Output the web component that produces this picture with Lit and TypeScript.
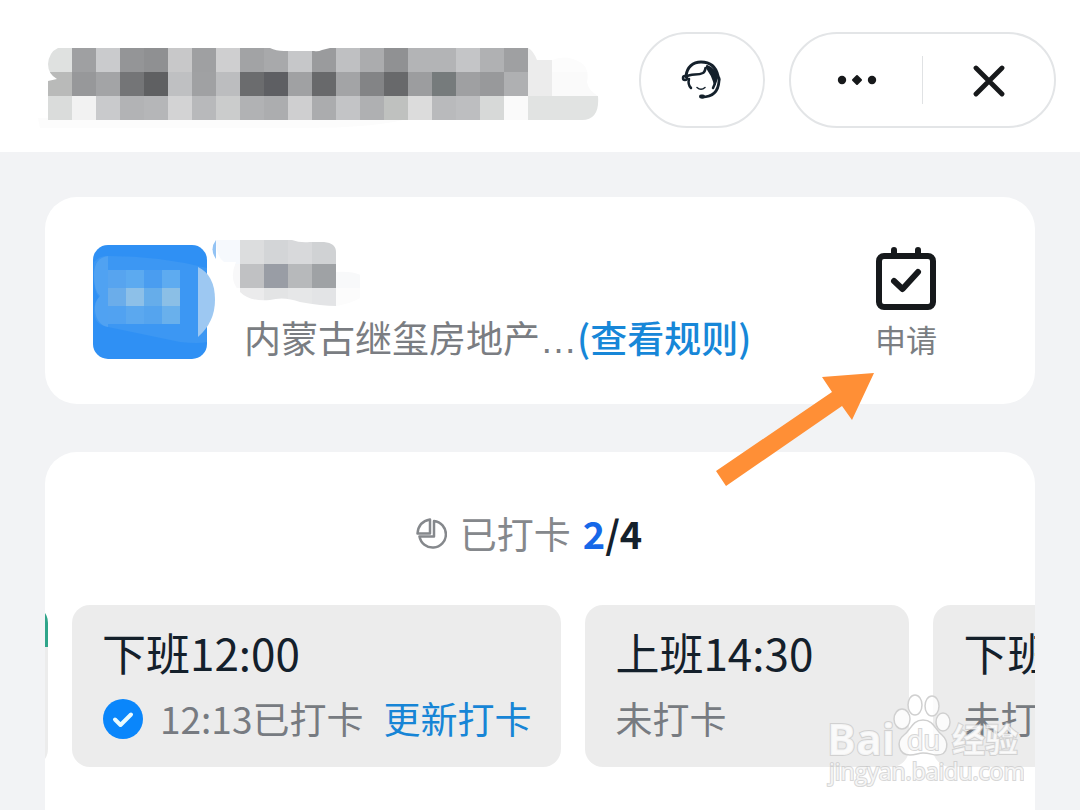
import { LitElement, html, css, svg, nothing } from "lit";
import { customElement, property } from "lit/decorators.js";

const TITLE_ROWS = [
  "dfe1e0 9fa0a2 cacbcd 949597 8f9092 c8c8c9 9fa0a2 cfcfd0 a2a3a5 a8a9ab c6c7c9 9a9b9d bfc0c2 abacae 909193 b3b4b6 b3b4b6 c4c5c7 b0b1b3 9fa0a2 ececec fcfcfc fcfcfc",
  "b9bab9 97989a a3a4a6 747577 5f6062 bfc0c2 a0a1a3 bcbdbf 6b6c6e 5e5f63 a0a1a3 68696b a3a4a6 838486 68696b 9c9d9f 767b7c 9fa0a2 98999b afb0b2 ececec fafafa fafafa",
  "dadcdb f2f2f2 c9cacc b2b3b5 b5b6b8 d3d3d4 b8b9bb cbcccc b1b2b4 acadaf cfcfd0 abacae c3c4c6 afb0b2 bfc1bf dcdcdc b9babc bdbec0 d7d9d8 fafafa e1e3e2 e1e3e2 e1e3e2",
];
const NAME_ROWS = [
  "f6f9fd dcddde d3d5d7 d8d9db d0d2d4 ffffff",
  "f8f8f9 c0c1c3 999da5 b7b9bb 9fa2a5 f8f9fa",
  "ffffff ebebec e3e4e5 e6e7e8 e3e4e6 fcfcfc",
];
const AVATAR_ROWS = [
  "57a4ef 5caaf0 4a9df0 5eabf0",
  "6badea 8dc0e8 66adea 8bbfe6",
  "51a2f1 5ba8ef 55a4ee 69b0ec",
];

const mosaic = (rows: string[], x: number, y: number, size: number) =>
  rows.map((row, r) =>
    row.split(" ").map(
      (c, i) => svg`<rect x=${x + i * size} y=${y + r * size} width=${size} height=${size} fill=${"#" + c} shape-rendering="crispEdges"></rect>`
    )
  );

@customElement("shift-slot")
export class ShiftSlot extends LitElement {
  @property() name = "";
  @property() status = "";
  @property({ type: Boolean }) done = false;
  @property({ type: Boolean }) badge = false;

  static styles = css`
    :host {
      display: flex;
      flex-direction: column;
      gap: 12px;
      flex: none;
      box-sizing: border-box;
      position: relative;
      overflow: hidden;
      min-width: 324px;
      padding: 20px 30px 22px;
      border-radius: 18px;
      background: #ececec;
    }
    .name {
      margin: 0;
      height: 54px;
      font-size: 44px;
      line-height: 54px;
      font-weight: 400;
      color: #14202b;
      white-space: nowrap;
    }
    .status {
      display: flex;
      align-items: center;
      height: 54px;
      font-size: 37px;
      line-height: 54px;
      color: #777b81;
      white-space: nowrap;
    }
    .tick {
      width: 42px;
      height: 42px;
      margin-right: 16px;
    }
    .update {
      margin-left: 20px;
      color: #1785d6;
      text-decoration: none;
    }
    .badge {
      position: absolute;
      top: 0;
      right: 0;
      width: 72px;
      height: 42px;
      background: #2fa58a;
    }
  `;

  render() {
    return html`
      ${this.badge ? html`<span class="badge"></span>` : nothing}
      <h3 class="name">${this.name}</h3>
      <div class="status">
        ${this.done
          ? html`<svg class="tick" viewBox="0 0 42 42" aria-hidden="true">
              <circle cx="21" cy="22" r="20" fill="#0a86fb"></circle>
              <path d="M13 22.500l5.500 5.500L29 17.500" fill="none" stroke="#e9fbff" stroke-width="4" stroke-linecap="round" stroke-linejoin="round"></path>
            </svg>`
          : nothing}
        <span>${this.status}</span>
        ${this.done ? html`<a class="update" href="#update">更新打卡</a>` : nothing}
      </div>
    `;
  }
}

@customElement("app-root")
export class AppRoot extends LitElement {
  static styles = css`
    :host {
      display: flex;
      flex-direction: column;
      position: relative;
      min-height: 100vh;
      overflow: hidden;
      background: #f2f3f5;
      font-family: "Noto Sans CJK SC", sans-serif;
    }
    button {
      padding: 0;
      border: 0;
      background: none;
      font: inherit;
      color: inherit;
      cursor: pointer;
    }
    svg {
      display: block;
    }
    .header {
      display: flex;
      align-items: center;
      gap: 24px;
      padding: 32px 24px 24px;
      background: #fff;
    }
    .title {
      flex: 0 1 576px;
      min-width: 0;
      height: 96px;
      margin-right: auto;
    }
    .service,
    .capsule {
      box-sizing: border-box;
      display: flex;
      align-items: center;
      justify-content: center;
      flex: none;
      height: 96px;
      border: 2px solid #e3e5e7;
      border-radius: 48px;
    }
    .service {
      width: 126px;
    }
    .capsule {
      width: 267px;
    }
    .capsule button {
      display: flex;
      flex: 1;
      align-items: center;
      justify-content: center;
      height: 100%;
    }
    .divider {
      width: 1px;
      height: 48px;
      background: #e0e2e4;
    }
    .main {
      display: flex;
      flex-direction: column;
      flex: 1;
      gap: 48px;
      padding: 45px 45px 0;
    }
    .card {
      background: #fff;
      border-radius: 32px;
    }
    .profile {
      position: relative;
      display: flex;
      align-items: flex-start;
      padding: 48px 98px 45px 48px;
    }
    .avatar {
      flex: none;
      width: 114px;
      height: 114px;
      overflow: visible;
    }
    .info {
      flex: 1;
      min-width: 0;
      margin-left: 37px;
    }
    .who {
      width: 144px;
      height: 70px;
      overflow: visible;
    }
    .company {
      display: flex;
      align-items: baseline;
      height: 44px;
      margin: 0;
      font-size: 37px;
      line-height: 44px;
      color: #7a7d82;
      white-space: nowrap;
    }
    .dots {
      font-family: "Liberation Sans", sans-serif;
    }
    .rules {
      color: #1787d8;
      text-decoration: none;
      font-weight: 500;
    }
    .apply {
      display: flex;
      flex-direction: column;
      align-items: center;
      gap: 9px;
      width: 62px;
      height: 114px;
      padding-top: 2px;
      font-size: 31px;
      line-height: 40px;
      color: #7b7e82;
      white-space: nowrap;
    }
    .pointer {
      position: absolute;
      top: 174px;
      right: 159px;
      width: 162px;
      height: 116px;
      z-index: 1;
    }
    .clock {
      flex: 1;
      overflow: hidden;
      padding-top: 54px;
      border-radius: 32px 32px 0 0;
    }
    .summary {
      display: flex;
      align-items: center;
      justify-content: center;
      height: 54px;
      margin: 0 0 45px;
      padding-right: 22px;
      font-size: 37px;
      line-height: 54px;
      font-weight: 400;
      color: #85888c;
    }
    .pie {
      margin-right: 13px;
    }
    .count {
      margin-left: 12px;
      font-size: 38px;
      font-weight: 700;
      color: #14202b;
    }
    .count span {
      color: #1668e8;
    }
    .slots {
      display: flex;
      gap: 24px;
    }
    .previous {
      margin-left: -321px;
    }
    .watermark {
      position: absolute;
      right: 56px;
      bottom: 18px;
      width: 200px;
      height: 100px;
      z-index: 2;
      pointer-events: none;
    }
    .brand,
    .site {
      fill: #fff;
      fill-opacity: 0.75;
      stroke: #c6c6c6;
      stroke-opacity: 0.7;
      stroke-width: 2px;
      paint-order: stroke;
    }
    .brand {
      font-family: "Open Sans", sans-serif;
      font-weight: 700;
      font-size: 43px;
    }
    .brand-du {
      font-size: 27px;
      font-weight: 400;
    }
    .brand-cn {
      font-family: "Noto Sans CJK SC", sans-serif;
      font-size: 33px;
    }
    .site {
      font-family: "Open Sans", sans-serif;
      font-size: 23px;
    }
  `;

  render() {
    return html`
      <header class="header">
        <svg class="title" viewBox="24 32 576 96" preserveAspectRatio="xMinYMid slice" aria-hidden="true">
          <defs>
            <clipPath id="title-shape">
              <path d="M58 48H270Q276 51 284 51H314Q318 52 322 50L330 48H528Q533 50 537 60H552Q566 54 580 62Q590 68 587 82Q588 90 598 96Q600 120 582 120H48V81L57 79Q48 74 48 64Q49 52 58 48Z"></path>
            </clipPath>
          </defs>
          <path d="M38 118H410Q380 128 300 128H40Z" fill="#fcfcfc"></path>
          <g clip-path="url(#title-shape)">${mosaic(TITLE_ROWS, 48, 48, 24)}</g>
        </svg>
        <button class="service" aria-label="客服">
          <svg width="42" height="42" viewBox="0 0 42 42" fill="none" stroke="#14202b" stroke-linecap="round" stroke-linejoin="round">
            <path d="M5 17C6 8 12 3 20 3C29 3 35 8 37 17" stroke-width="3"></path>
            <path d="M26 7C32 9 35 14 36 19L34 25C32 18 29 13 26 9Z" fill="#14202b" stroke-width="2"></path>
            <path d="M5 18C10 14 16 17 22 14Q24 13 24.500 9" stroke-width="2.500"></path>
            <circle cx="4" cy="19" r="2" stroke-width="2.500"></circle>
            <path d="M8 20C7 24 8 27 10 29" stroke-width="2.500"></path>
            <path d="M36 17Q39 19 38 22Q37 38 21 38" stroke-width="2.800"></path>
            <path d="M34 22Q34 26 32 29" stroke-width="2.500"></path>
            <path d="M20 37.500h2" stroke-width="4"></path>
            <path d="M16 28.500Q20 32 24 28.500" stroke-width="1.500"></path>
          </svg>
        </button>
        <div class="capsule">
          <button aria-label="更多">
            <svg width="40" height="12" viewBox="0 0 40 12" fill="#17191b">
              <circle cx="5" cy="6" r="4.200"></circle>
              <path d="M20 2L24 6L20 10L16 6Z" stroke="#17191b" stroke-width="2" stroke-linejoin="round"></path>
              <circle cx="35" cy="6" r="4.200"></circle>
            </svg>
          </button>
          <span class="divider"></span>
          <button aria-label="关闭">
            <svg width="32" height="34" viewBox="0 0 32 34" stroke="#17191b" stroke-width="4.800" stroke-linecap="round">
              <path d="M3 5L29 31M29 5L3 31"></path>
            </svg>
          </button>
        </div>
      </header>

      <main class="main">
        <section class="card profile">
          <svg class="avatar" viewBox="93 245 114 114" aria-hidden="true">
            <rect x="93" y="245" width="114" height="114" rx="15" fill="#2f90f4"></rect>
            <path d="M94 262Q100 255 108 256Q160 256 207 268V342Q198 344 180 342L108 327Q94 325 94 311Q94 302 99 297Q92 290 94 262Z" fill="#3c97f3"></path>
            <path d="M108 256Q94 258 94 275Q94 291 100 296Q94 302 95 311Q97 325 108 327Z" fill="#50a2f2"></path>
            ${mosaic(AVATAR_ROWS, 108, 270, 18)}
            <path d="M198 267Q215 275 215 300Q215 322 198 337Z" fill="#9dc8f2"></path>
          </svg>
          <div class="info">
            <svg class="who" viewBox="244 245 144 70" aria-hidden="true">
              <defs>
                <clipPath id="name-shape">
                  <path d="M216 240H292Q300 243 310 242H324Q336 243 336 252V272Q364 270 368 284Q370 300 336 306Q322 306 300 302Q284 296 270 300Q250 302 240 292Q228 280 236 262H224Q216 256 216 240Z"></path>
                </clipPath>
              </defs>
              <path d="M216 240Q209 249 216 259Z" fill="#93c3f4"></path>
              <g clip-path="url(#name-shape)">${mosaic(NAME_ROWS, 216, 240, 24)}</g>
            </svg>
            <p class="company">内蒙古继玺房地产<span class="dots">…</span><a class="rules" href="#rules">(查看规则)</a></p>
          </div>
          <button class="apply">
            <svg width="60" height="63" viewBox="0 0 60 63" fill="none" stroke="#16191c" stroke-width="6" stroke-linecap="round" stroke-linejoin="round">
              <rect x="3" y="9" width="54" height="51" rx="5"></rect>
              <path d="M18 3V8M42 3V8"></path>
              <path d="M18 34L26.500 42L42 25"></path>
            </svg>
            申请
          </button>
          <svg class="pointer" viewBox="714 371 162 116" aria-hidden="true">
            <path d="M874 373L822 377L832 392L716 471L726 486L842 406L852 420Z" fill="#ff8f36"></path>
          </svg>
        </section>

        <section class="card clock">
          <h2 class="summary">
            <svg class="pie" width="31" height="31" viewBox="0 0 31 31" fill="none" stroke="#85888c" stroke-width="2.500" stroke-linejoin="round" aria-hidden="true">
              <path d="M14 1.500V15.500H1.500Q2.500 3.500 14 1.500Z"></path>
              <path d="M18 3A13.300 13.300 0 1 1 3.500 18.500H18Z"></path>
            </svg>
            已打卡<strong class="count"><span>2</span>/4</strong>
          </h2>
          <div class="slots">
            <shift-slot class="previous" badge></shift-slot>
            <shift-slot name="下班12:00" status="12:13已打卡" done></shift-slot>
            <shift-slot name="上班14:30" status="未打卡"></shift-slot>
            <shift-slot name="下班18:00" status="未打卡"></shift-slot>
          </div>
        </section>
      </main>

      <svg class="watermark" viewBox="824 692 200 100" aria-hidden="true">
        <text class="brand" x="827" y="755">Bai</text>
        <g fill="#fff" fill-opacity="0.8" stroke="#d0d0d0" stroke-width="1.500">
          <ellipse cx="902" cy="719" rx="8" ry="10"></ellipse>
          <ellipse cx="915" cy="705" rx="7" ry="10"></ellipse>
          <ellipse cx="932" cy="706" rx="7" ry="10"></ellipse>
          <ellipse cx="943" cy="722" rx="7" ry="9"></ellipse>
          <path d="M923 720C912 720 911 730 904 735C896 741 898 755 910 755C916 755 918 753 923 753C930 753 932 755 937 755C949 755 949 741 942 735C935 730 934 720 923 720Z"></path>
        </g>
        <text class="brand brand-du" x="907" y="750">du</text>
        <text class="brand brand-cn" x="952" y="752">经验</text>
        <text class="site" x="829" y="780">jingyan.baidu.com</text>
      </svg>
    `;
  }
}
